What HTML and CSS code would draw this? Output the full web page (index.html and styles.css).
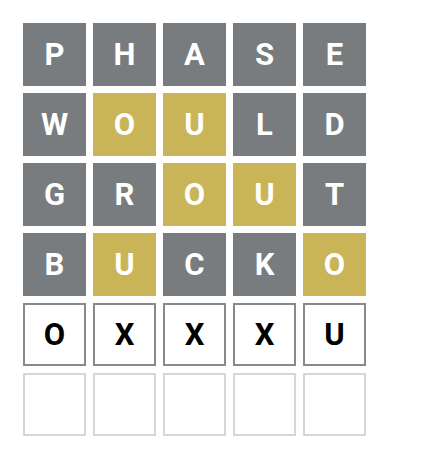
FILE: index.html
```html
<!DOCTYPE html>
<html lang="en">
<head>
  <meta charset="UTF-8" />
  <meta name="viewport" content="width=device-width, initial-scale=1.0"/>
  <title>Wordle Board</title>
  <link rel="stylesheet" href="styles.css">
</head>
<body>
  <div class="board">
    <!-- Guess 1 -->
    <div class="row">
      <div class="tile absent">P</div>
      <div class="tile absent">H</div>
      <div class="tile absent">A</div>
      <div class="tile absent">S</div>
      <div class="tile absent">E</div>
    </div>

    <!-- Guess 2 -->
    <div class="row">
      <div class="tile absent">W</div>
      <div class="tile present">O</div>
      <div class="tile present">U</div>
      <div class="tile absent">L</div>
      <div class="tile absent">D</div>
    </div>

    <!-- Guess 3 -->
    <div class="row">
      <div class="tile absent">G</div>
      <div class="tile absent">R</div>
      <div class="tile present">O</div>
      <div class="tile present">U</div>
      <div class="tile absent">T</div>
    </div>

    <!-- Guess 4 -->
    <div class="row">
      <div class="tile absent">B</div>
      <div class="tile present">U</div>
      <div class="tile absent">C</div>
      <div class="tile absent">K</div>
      <div class="tile present">O</div>
    </div>

    <!-- Current guess -->
    <div class="row">
      <div class="tile typed">O</div>
      <div class="tile typed">X</div>
      <div class="tile typed">X</div>
      <div class="tile typed">X</div>
      <div class="tile typed">U</div>
    </div>

    <!-- Empty row -->
    <div class="row">
      <div class="tile empty"></div>
      <div class="tile empty"></div>
      <div class="tile empty"></div>
      <div class="tile empty"></div>
      <div class="tile empty"></div>
    </div>
  </div>
</body>
</html>
```

FILE: styles.css
```css
body {
  font-family: Roboto, "Liberation Sans", Arial, sans-serif;
  margin: 0;
  padding: 23px;
  background-color: #ffffff;
}

.board {
  display: flex;
  flex-direction: column;
  gap: 7px;
}

.row {
  display: flex;
  gap: 7px;
}

.tile {
  box-sizing: border-box;
  width: 63px;
  height: 63px;
  display: flex;
  align-items: center;
  justify-content: center;
  font-size: 31px;
  font-weight: 700;
  line-height: 1;
  color: #ffffff;
  text-transform: uppercase;
}

.absent {
  background-color: #787c7e;
}

.present {
  background-color: #c9b458;
}

.typed {
  border: 2px solid #878a8c;
  color: #000000;
}

.empty {
  border: 2px solid #d3d6da;
}
```
